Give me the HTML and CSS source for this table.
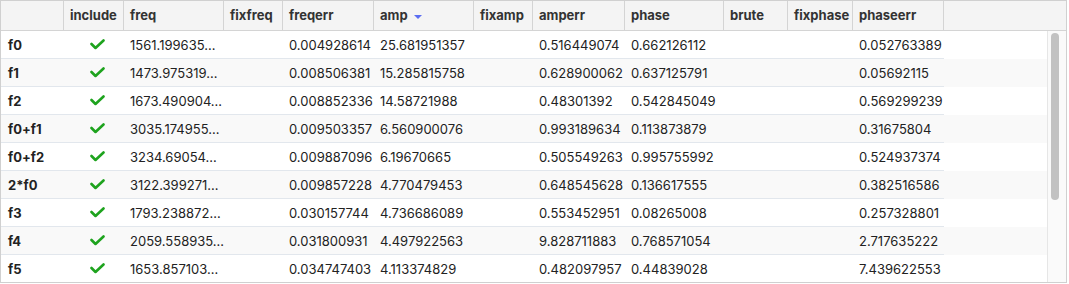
FILE: index.html
```html
<!DOCTYPE html>
<html>
<head>
    <title>Frequencies</title>
    <link rel="stylesheet" href="styles.css">
</head>
<body>
    <div class="table">
        <div class="head">
            <div class="hcell"></div>
            <div class="hcell">include</div>
            <div class="hcell">freq</div>
            <div class="hcell">fixfreq</div>
            <div class="hcell">freqerr</div>
            <div class="hcell">amp <span class="sort"></span></div>
            <div class="hcell">fixamp</div>
            <div class="hcell">amperr</div>
            <div class="hcell">phase</div>
            <div class="hcell">brute</div>
            <div class="hcell">fixphase</div>
            <div class="hcell">phaseerr</div>
            <div class="hcell filler"></div>
        </div>

        <div class="body">
            <div class="rows" id="rows"></div>
            <div class="scrollbar"><div class="thumb"></div></div>
        </div>
    </div>

    <script>
        // name, freq, freqerr, amp, amperr, phase, phaseerr
        const data = [
            ['f0', '1561.199635…', '0.004928614', '25.681951357', '0.516449074', '0.662126112', '0.052763389'],
            ['f1', '1473.975319…', '0.008506381', '15.285815758', '0.628900062', '0.637125791', '0.05692115'],
            ['f2', '1673.490904…', '0.008852336', '14.58721988', '0.48301392', '0.542845049', '0.569299239'],
            ['f0+f1', '3035.174955…', '0.009503357', '6.560900076', '0.993189634', '0.113873879', '0.31675804'],
            ['f0+f2', '3234.69054…', '0.009887096', '6.19670665', '0.505549263', '0.995755992', '0.524937374'],
            ['2*f0', '3122.399271…', '0.009857228', '4.770479453', '0.648545628', '0.136617555', '0.382516586'],
            ['f3', '1793.238872…', '0.030157744', '4.736686089', '0.553452951', '0.08265008', '0.257328801'],
            ['f4', '2059.558935…', '0.031800931', '4.497922563', '9.828711883', '0.768571054', '2.717635222'],
            ['f5', '1653.857103…', '0.034747403', '4.113374829', '0.482097957', '0.44839028', '7.439622553']
        ];

        const check = '<svg width="15" height="11" viewBox="0 0 15 11"><polyline points="1.5,5 5.5,9 13.5,1.5" fill="none" stroke="#1ea31e" stroke-width="2.6" stroke-linecap="round" stroke-linejoin="round"/></svg>';

        const rows = document.getElementById('rows');
        data.forEach(d => {
            const row = document.createElement('div');
            row.className = 'row';
            row.innerHTML =
                `<div class="cell name">${d[0]}</div>` +
                `<div class="cell check">${check}</div>` +
                `<div class="cell">${d[1]}</div>` +
                `<div class="cell"></div>` +
                `<div class="cell">${d[2]}</div>` +
                `<div class="cell">${d[3]}</div>` +
                `<div class="cell"></div>` +
                `<div class="cell">${d[4]}</div>` +
                `<div class="cell">${d[5]}</div>` +
                `<div class="cell"></div>` +
                `<div class="cell"></div>` +
                `<div class="cell">${d[6]}</div>` +
                `<div class="cell filler"></div>`;
            rows.appendChild(row);
        });
    </script>
</body>
</html>
```

FILE: styles.css
```css
html, body {
    margin: 0;
    background: #fff;
    overflow: hidden;
}

body {
    font-family: 'Inter', 'Liberation Sans', sans-serif;
    font-size: 13px;
    color: #222;
}

.table {
    box-sizing: border-box;
    width: 1067px;
    height: 283px;
    border: 1px solid #d0d0d0;
    display: flex;
    flex-direction: column;
    overflow: hidden;
}

.head,
.row {
    display: grid;
    grid-template-columns: 63px 60px 100px 59px 91px 100px 59px 92px 99px 64px 65px 91px 1fr;
}

.head {
    height: 30px;
    background-color: #f4f4f4;
    border-bottom: 1px solid #d4d4d4;
    box-sizing: border-box;
    flex: none;
}

.hcell {
    box-sizing: border-box;
    border-right: 1px solid #d4d4d4;
    padding: 0 6px;
    font-weight: 700;
    color: #333;
    line-height: 29px;
    white-space: nowrap;
    overflow: hidden;
}

.hcell.filler {
    border-right: none;
}

.sort {
    display: inline-block;
    width: 0;
    height: 0;
    margin-left: 3px;
    vertical-align: 1px;
    border-left: 4px solid transparent;
    border-right: 4px solid transparent;
    border-top: 4px solid #5a6df2;
}

.body {
    flex: 1;
    display: flex;
    min-height: 0;
}

.rows {
    flex: 1;
    overflow: hidden;
}

.row:nth-child(even) {
    background-color: #f9f9f9;
}

.cell {
    box-sizing: border-box;
    height: 28px;
    line-height: 28px;
    padding: 0 6px;
    border-bottom: 1px solid #e2e7ed;
    white-space: nowrap;
}

.cell.name {
    font-weight: 700;
    padding-left: 7px;
}

.cell.check {
    display: flex;
    align-items: center;
    justify-content: center;
    padding: 0 0 0 6px;
}

.cell.filler {
    border-bottom: none;
}

.scrollbar {
    width: 15px;
    flex: none;
    background-color: #fafafa;
    border-left: 1px solid #e6e6e6;
    padding: 2px 0 0 3px;
}

.thumb {
    width: 8px;
    height: 167px;
    border-radius: 4px;
    background-color: #c2c2c2;
}
```
